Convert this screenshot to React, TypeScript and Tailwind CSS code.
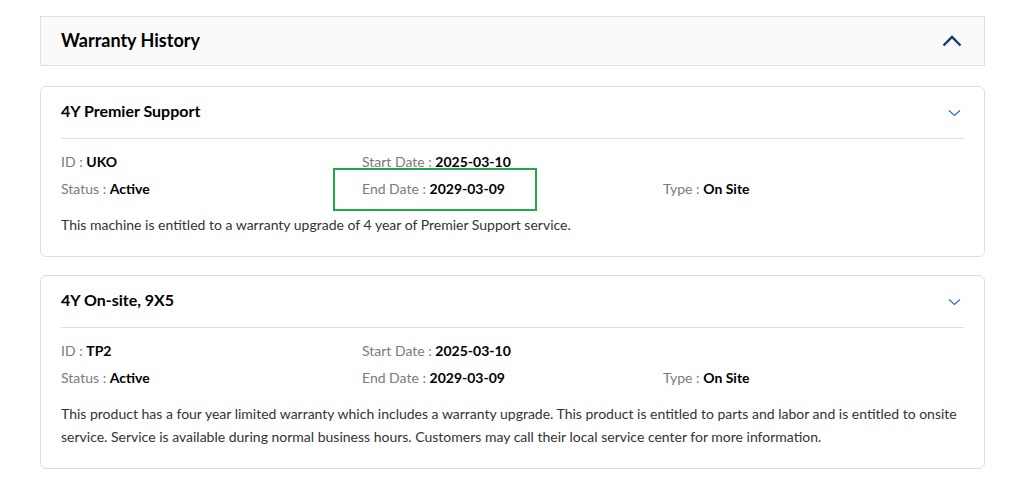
import React from 'react'

interface Warranty {
  title: string
  id: string
  status: string
  startDate: string
  endDate: string
  type: string
  description: string
  highlightEnd?: boolean
}

const warranties: Warranty[] = [
  {
    title: '4Y Premier Support',
    id: 'UKO',
    status: 'Active',
    startDate: '2025-03-10',
    endDate: '2029-03-09',
    type: 'On Site',
    description: 'This machine is entitled to a warranty upgrade of 4 year of Premier Support service.',
    highlightEnd: true,
  },
  {
    title: '4Y On-site, 9X5',
    id: 'TP2',
    status: 'Active',
    startDate: '2025-03-10',
    endDate: '2029-03-09',
    type: 'On Site',
    description:
      'This product has a four year limited warranty which includes a warranty upgrade. This product is entitled to parts and labor and is entitled to onsite service. Service is available during normal business hours. Customers may call their local service center for more information.',
  },
]

function Field({ label, value }: { label: string; value: string }) {
  return (
    <div className="h-5 leading-5 text-[14px]">
      <span className="text-[#7a7a7a]">{label} : </span>
      <span className="font-bold text-black">{value}</span>
    </div>
  )
}

function WarrantyCard({ w }: { w: Warranty }) {
  return (
    <div className="rounded-md border border-[#dedede] bg-white px-5 pb-5">
      <div className="flex h-[52px] items-center justify-between border-b border-[#dedede]">
        <h3 className="pb-[4px] text-[16px] font-bold text-black">{w.title}</h3>
        <svg className="mr-[3px] h-[8px] w-[13px]" viewBox="0 0 13 8" fill="none" stroke="#2f6bc4" strokeWidth={1.2}>
          <path d="M1 1.5l5.5 5 5.5-5" />
        </svg>
      </div>
      <div className="grid grid-cols-3 gap-y-[7px] pt-[13px]">
        <Field label="ID" value={w.id} />
        <Field label="Start Date" value={w.startDate} />
        <div />
        <Field label="Status" value={w.status} />
        <div className="relative">
          <Field label="End Date" value={w.endDate} />
          {w.highlightEnd && (
            <div className="pointer-events-none absolute -left-[29px] -top-[11px] h-[43px] w-[204px] border-2 border-[#22a846]" />
          )}
        </div>
        <Field label="Type" value={w.type} />
      </div>
      <p className="mt-[14px] text-[14px] leading-[23px] text-[#333]">{w.description}</p>
    </div>
  )
}

export default function App() {
  return (
    <div className="min-h-screen bg-white pt-4" style={{ fontFamily: 'Lato, "Open Sans", sans-serif' }}>
      <div className="ml-10 w-[945px]">
        {/* Header */}
        <div className="flex h-[50px] items-center justify-between border border-[#e0e0e0] bg-[#fafafa] px-5">
          <h2 className="pb-[2px] text-[18px] font-bold text-black">Warranty History</h2>
          <svg className="mr-[2px] h-[12px] w-[20px]" viewBox="0 0 20 12" fill="none" stroke="#0d3b6e" strokeWidth={2.4}>
            <path d="M1.5 10.5L10 2l8.5 8.5" />
          </svg>
        </div>

        <div className="mt-5 flex flex-col gap-[18px]">
          {warranties.map(w => (
            <WarrantyCard key={w.title} w={w} />
          ))}
        </div>
      </div>
    </div>
  )
}
